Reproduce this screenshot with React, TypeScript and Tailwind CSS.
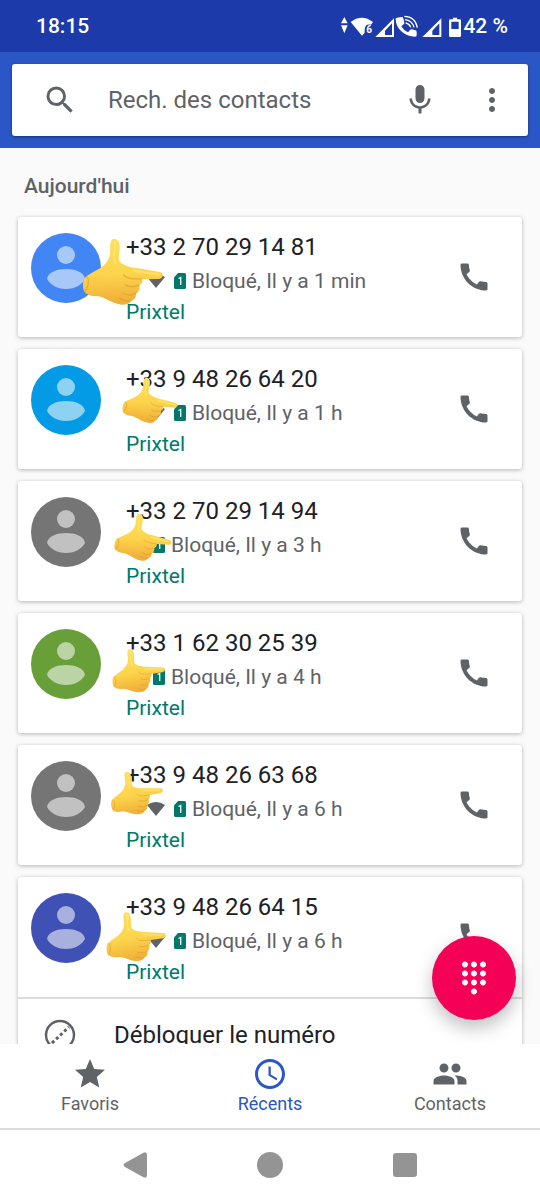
import { useState } from "react";
import { MdCall, MdMic, MdMoreVert, MdPeople, MdSchedule, MdSearch, MdStar, MdDialpad } from "react-icons/md";

interface Call {
  number: string;
  when: string;
  avatar: string;
  wifi: boolean;
  // place of the hand inside the card, in px and degrees
  hand: { left: number; top: number; width: number; turn: number };
}

const calls: Call[] = [
  { number: "+33 2 70 29 14 81", when: "Il y a 1 min", avatar: "bg-[#4285f4]", wifi: true, hand: { left: 66, top: 23, width: 79, turn: 7 } },
  { number: "+33 9 48 26 64 20", when: "Il y a 1 h", avatar: "bg-[#039be5]", wifi: true, hand: { left: 106, top: 30, width: 54, turn: 12 } },
  { number: "+33 2 70 29 14 94", when: "Il y a 3 h", avatar: "bg-[#757575]", wifi: false, hand: { left: 98, top: 34, width: 56, turn: 12 } },
  { number: "+33 1 62 30 25 39", when: "Il y a 4 h", avatar: "bg-[#689f38]", wifi: false, hand: { left: 94, top: 36, width: 53, turn: 0 } },
  { number: "+33 9 48 26 63 68", when: "Il y a 6 h", avatar: "bg-[#757575]", wifi: true, hand: { left: 92, top: 26, width: 53, turn: -3 } },
  { number: "+33 9 48 26 64 15", when: "Il y a 6 h", avatar: "bg-[#3f51b5]", wifi: true, hand: { left: 88, top: 35, width: 60, turn: 0 } },
];

const tabs = [
  { label: "Favoris", Icon: MdStar },
  { label: "Récents", Icon: MdSchedule },
  { label: "Contacts", Icon: MdPeople },
];

const StatusIcons = () => (
  <svg viewBox="60 42 360 72" className="h-6 w-[120px]" fill="#fff" aria-hidden="true">
    <path d="M70 48l10 19H60zM60 73h20L70 97z" />
    <path d="M89 63Q122 37 156 63L150 71Q132 67 131 86L131 95L123 104z" />
    <text x="136" y="96" fontSize="30" fontWeight="700" fontFamily="Roboto, sans-serif">6</text>
    <path fillRule="evenodd" d="M163 108L219 52V108zM192 89V102H213V67z" />
    <path d="M228 50L242 48Q246 48 247 52L250 65Q250 68 248 70L241 76Q248 89 261 94L268 86Q270 84 273 85L283 88Q287 89 287 93V103Q287 107 282 107C250 107 224 82 224 54Q224 51 228 50Z" />
    <path d="M250 46Q283 47 289 80M252 56Q273 58 279 79M254 66Q266 69 269 79" fill="none" stroke="#fff" strokeWidth="4" />
    <path fillRule="evenodd" d="M304 108L361 52V108zM334 89V102H355V67z" />
    <path fillRule="evenodd" d="M396 50h12v5h8q4 0 4 4v45q0 4-4 4h-28q-4 0-4-4V59q0-4 4-4h8zM391 62v22h22V62z" />
  </svg>
);

const PointingHand = ({ id }: { id: string }) => (
  <svg viewBox="0 0 180 148" className="w-full" aria-hidden="true">
    <defs>
      <linearGradient id={id} x1="0" y1="0" x2="0.2" y2="1">
        <stop offset="0" stopColor="#ffe05f" />
        <stop offset="0.6" stopColor="#fdd44b" />
        <stop offset="1" stopColor="#f0b13a" />
      </linearGradient>
    </defs>
    <path
      fill={`url(#${id})`}
      d="M59 1C52 2 51 12 53 22C56 40 53 52 43 64C34 75 19 82 8 92C0 98 0 116 5 126C10 135 24 137 39 135C55 136 65 143 82 146C99 149 112 146 115 136C123 133 126 126 124 118C131 113 132 105 129 99C135 94 136 89 134 84L171 79C182 77 183 65 172 63L115 60C100 60 86 57 77 49C73 39 77 23 73 11C71 3 65 0 59 1Z"
    />
    <path d="M7 94C17 98 14 119 8 128M91 79C98 89 117 85 132 84M98 101C105 106 119 104 129 99M95 121C102 125 115 124 124 118M116 135C106 140 95 137 89 134" fill="none" stroke="#d9912b" strokeWidth="3" strokeLinecap="round" opacity="0.5" />
    <path d="M62 8C66 24 60 42 69 55M112 67L170 69" fill="none" stroke="#fff08a" strokeWidth="5" strokeLinecap="round" opacity="0.5" />
  </svg>
);

const Avatar = ({ color }: { color: string }) => (
  <div className={`h-[70px] w-[70px] shrink-0 rounded-full ${color}`}>
    <svg viewBox="0 0 70 70" fill="#fff" fillOpacity="0.55" aria-hidden="true">
      <circle cx="35" cy="22" r="9" />
      <path d="M16 46C17 39 26 36 35 36S53 39 54 46C50 53 42 56 35 56S20 53 16 46Z" />
    </svg>
  </div>
);

const SimBadge = () => (
  <svg viewBox="0 0 12 16" className="mr-1.5 h-4 w-3 shrink-0" aria-label="SIM 1">
    <path d="M4 0h6.500Q12 0 12 1.500v13Q12 16 10.500 16h-9Q0 16 0 14.500V4.500z" fill="#00796b" />
    <path d="M4.500 5.500L6.700 4.500V12" fill="none" stroke="#fff" strokeWidth="1.300" />
  </svg>
);

const CallCard = ({ call, index, last }: { call: Call; index: number; last: boolean }) => (
  <li className="relative rounded-[3px] bg-white shadow-[0_1px_4px_rgba(0,0,0,0.28)]">
    <div className="flex items-start pt-[14px] pr-[30px] pb-[10px] pl-[13px]">
      <div className="pt-0.5">
        <Avatar color={call.avatar} />
      </div>
      <div className="ml-[25px] min-w-0 flex-1">
        <p className="text-[24px] leading-8 text-[#202124]">{call.number}</p>
        <div
          className={`mt-0.5 flex h-8 items-center text-[21px] leading-8 whitespace-nowrap text-[#5f6368] ${call.wifi ? "pl-[21px]" : "pl-[27px]"}`}
        >
          {call.wifi && (
            <svg viewBox="0 0 18 14" className="mr-[9px] h-[14px] w-[18px] shrink-0" fill="#5f6368" aria-hidden="true">
              <path d="M0 3Q9-3 18 3L9 14z" />
            </svg>
          )}
          <SimBadge />
          <span>Bloqué, {call.when}</span>
        </div>
        <p className="text-[21px] leading-[30px] text-[#00796b]">Prixtel</p>
      </div>
      <button type="button" aria-label={`Appeler ${call.number}`} className="mt-7 text-[#5f6368]">
        <MdCall size={36} />
      </button>
    </div>
    <div
      className="pointer-events-none absolute"
      style={{
        left: call.hand.left,
        top: call.hand.top,
        width: call.hand.width,
        transform: `rotate(${call.hand.turn}deg)`,
      }}
    >
      <PointingHand id={`hand-${index}`} />
    </div>
    {last && (
      <button
        type="button"
        className="flex h-[74px] w-full items-center border-t-2 border-[#dadce0] pl-6 text-left text-[24px] text-[#202124]"
      >
        <svg viewBox="0 0 36 36" className="mr-9 h-9 w-9" fill="none" stroke="#5f6368" aria-hidden="true">
          <circle cx="18" cy="18" r="14" strokeWidth="2.500" />
          <path d="M10 26L27 10" strokeWidth="3" strokeDasharray="3 2.600" />
        </svg>
        Débloquer le numéro
      </button>
    )}
  </li>
);

const App = () => {
  const [active, setActive] = useState("Récents");

  return (
    <div className="flex h-screen flex-col bg-[#fafafa] font-[Roboto,sans-serif]">
      <div className="flex h-[52px] shrink-0 items-center justify-between bg-[#1c3aa9] pt-0.5 pr-8 pl-9 text-[21px] font-medium text-white">
        <span>18:15</span>
        <div className="flex items-center gap-0.5">
          <StatusIcons />
          <span>42 %</span>
        </div>
      </div>

      <header className="shrink-0 bg-[#2a56c6] p-3">
        <div className="flex h-[72px] items-center rounded-[3px] bg-white pr-[18px] pl-[30px] text-[#5f6368] shadow-[0_1px_3px_rgba(0,0,0,0.4)]">
          <MdSearch size={36} className="shrink-0" />
          <input
            type="text"
            aria-label="Rech. des contacts"
            placeholder="Rech. des contacts"
            className="ml-[30px] min-w-0 flex-1 text-[24px] outline-none placeholder:text-[#5f6368]"
          />
          <button type="button" aria-label="Recherche vocale" className="mr-9">
            <MdMic size={36} />
          </button>
          <button type="button" aria-label="Plus d'options">
            <MdMoreVert size={36} />
          </button>
        </div>
      </header>

      <main className="relative min-h-0 flex-1 overflow-hidden">
        <h2 className="px-6 pt-[23px] pb-4 text-[21px] leading-[30px] font-medium text-[#5f6368]">Aujourd'hui</h2>
        <ul className="flex flex-col gap-3 px-[18px]">
          {calls.map((call, i) => (
            <CallCard key={call.number} call={call} index={i} last={i === calls.length - 1} />
          ))}
        </ul>
        <button
          type="button"
          aria-label="Clavier"
          className="absolute right-6 bottom-6 flex h-[84px] w-[84px] items-center justify-center rounded-full bg-[#f50057] text-white shadow-[0_8px_18px_rgba(0,0,0,0.25)]"
        >
          <MdDialpad size={36} />
        </button>
      </main>

      <nav className="grid h-[86px] shrink-0 grid-cols-3 border-b-2 border-[#dadce0] bg-white">
        {tabs.map(({ label, Icon }) => (
          <button
            key={label}
            type="button"
            onClick={() => setActive(label)}
            className={`flex flex-col items-center pt-3 text-[18px] leading-6 ${active === label ? "text-[#2a56c6]" : "text-[#5f6368]"}`}
          >
            <Icon size={36} />
            <span>{label}</span>
          </button>
        ))}
      </nav>

      <div className="shrink-0 bg-white">
        <div className="mx-auto grid h-[70px] w-3/4 grid-cols-3 place-items-center">
          <button type="button" aria-label="Retour">
            <svg viewBox="0 0 26 26" className="h-[26px] w-[26px]" fill="#949494">
              <path d="M3 11L21 1Q25-1 25 3V23Q25 27 21 25L3 15Q0 13 3 11Z" />
            </svg>
          </button>
          <button type="button" aria-label="Accueil" className="h-[26px] w-[26px] rounded-full bg-[#949494]" />
          <button type="button" aria-label="Applications récentes" className="h-6 w-6 rounded-[3px] bg-[#949494]" />
        </div>
      </div>
    </div>
  );
};

export default App;
